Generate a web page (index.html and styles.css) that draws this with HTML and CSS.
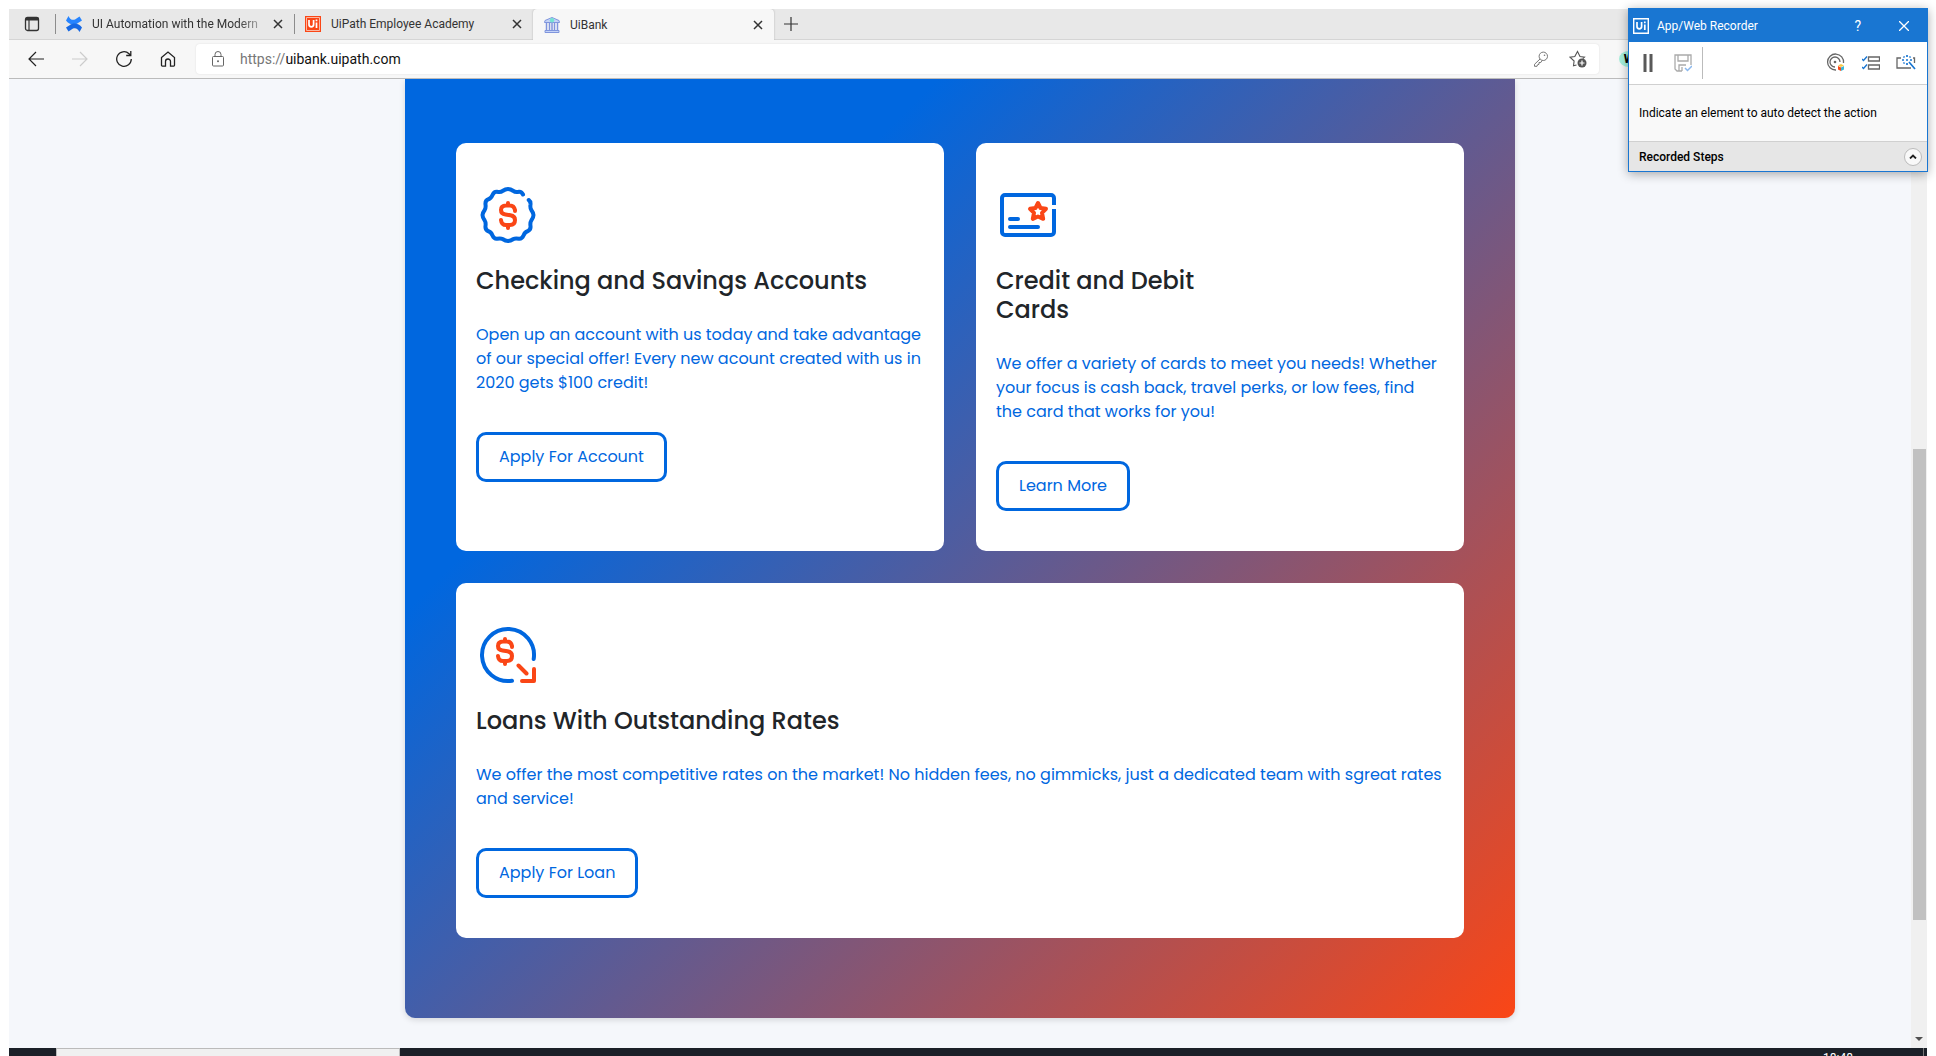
FILE: index.html
```html
<!DOCTYPE html>
<html lang="en">
<head>
<meta charset="utf-8">
<title>UiBank</title>
<link rel="stylesheet" href="styles.css">
</head>
<body>
<div class="desktop">
  <nav class="tabs" aria-label="Browser tabs">
    <button class="tab-menu" aria-label="Tab actions"><svg width="16" height="16" viewBox="0 0 16 16"><rect x="1.500" y="1.500" width="13" height="13" rx="2" fill="none" stroke="#333" stroke-width="1.300"/><path d="M1.500 3h13" stroke="#333" stroke-width="3"/><path d="M5 4v10" stroke="#333" stroke-width="1.200"/></svg></button>
    <div class="tab">
      <svg width="16" height="16" viewBox="0 0 16 16"><path d="M2.500 0C4 3.500 6.500 4.500 9 3.500L13.500.500 16 4.500l-4 2.500C9 9.500 3 9 0 4.500z" fill="#2684ff"/><path d="M13.500 16C12 12.500 9.500 11.500 7 12.500L2.500 15.500 0 11.500l4-2.500C7 6.500 13 7 16 11.500z" fill="#1668e3"/></svg>
      <span class="tab-title fade">UI Automation with the Modern</span>
      <button class="close" aria-label="Close tab"><svg width="10" height="10" viewBox="0 0 10 10"><path d="M1 1l8 8M9 1l-8 8" stroke="#333" stroke-width="1.500"/></svg></button>
    </div>
    <div class="tab">
      <svg width="16" height="16" viewBox="0 0 16 16"><path fill="#fa4616" d="M0 0h16v16H0z"/><path d="M1.500 1.500h13v13h-13z" fill="none" stroke="#fbb7a2"/><path d="M4 4v4.500a2.300 2.300 0 0 0 4.600 0V4M11.500 6.500V12M11.500 3.500v1.800" fill="none" stroke="#fff" stroke-width="1.700"/></svg>
      <span class="tab-title">UiPath Employee Academy</span>
      <button class="close" aria-label="Close tab"><svg width="10" height="10" viewBox="0 0 10 10"><path d="M1 1l8 8M9 1l-8 8" stroke="#333" stroke-width="1.500"/></svg></button>
    </div>
    <div class="tab active">
      <svg width="16" height="16" viewBox="0 0 16 16"><path d="M.500 5.500L1 3.500l7-3 7 3 .500 2z" fill="#c5d3f7" stroke="#7f95dd"/><circle cx="8" cy="3.300" r="2.200" fill="#74e3d3"/><path d="M2.500 6v7M5.500 6v7M8 6v7M10.500 6v7M13.500 6v7" stroke="#7f95dd" stroke-width="1.500"/><path d="M1 13.500h14v2H1z" fill="#c5d3f7" stroke="#7f95dd"/></svg>
      <span class="tab-title">UiBank</span>
      <button class="close" aria-label="Close tab"><svg width="10" height="10" viewBox="0 0 10 10"><path d="M1 1l8 8M9 1l-8 8" stroke="#333" stroke-width="1.500"/></svg></button>
    </div>
    <button class="new-tab" aria-label="New tab"><svg width="14" height="14" viewBox="0 0 14 14"><path d="M7 0v14M0 7h14" stroke="#333" stroke-width="1.200"/></svg></button>
  </nav>

  <header class="toolbar">
    <button aria-label="Back"><svg width="16" height="16" viewBox="0 0 16 16"><path d="M16 8H1M8 1L1 8l7 7" fill="none" stroke="#222" stroke-width="1.200"/></svg></button>
    <button aria-label="Forward" disabled><svg width="16" height="16" viewBox="0 0 16 16"><path d="M0 8h15M8 1l7 7-7 7" fill="none" stroke="#ccc" stroke-width="1.200"/></svg></button>
    <button aria-label="Refresh"><svg width="16" height="16" viewBox="0 0 16 16"><path d="M15.300 8A7.300 7.300 0 1 1 13 2.700l1.500 1.500M14.800 0v4.500h-4.600" fill="none" stroke="#222" stroke-width="1.300"/></svg></button>
    <button aria-label="Home"><svg width="16" height="16" viewBox="0 0 16 16"><path d="M1.500 6.500L8 1l6.500 5.500V14.300a.8.800 0 0 1-.8.800h-3.200V10.500a2.500 2.500 0 0 0-5 0V15.100H2.300a.8.800 0 0 1-.8-.8z" fill="none" stroke="#222" stroke-width="1.300"/></svg></button>
    <div class="address">
      <svg width="14" height="16" viewBox="0 0 14 16"><rect x="1.500" y="5.500" width="11" height="9.500" rx="1" fill="none" stroke="#666"/><path d="M4 5.500V3.500a3 3 0 0 1 6 0v2" fill="none" stroke="#666"/><circle cx="7" cy="10.300" r="1" fill="#666"/></svg>
      <a class="url" href="#"><span class="scheme">https://</span>uibank.uipath.com</a>
      <button aria-label="Passwords"><svg width="16" height="16" viewBox="0 0 16 16"><circle cx="10.300" cy="5.300" r="4.200" fill="none" stroke="#777"/><circle cx="11.500" cy="4.200" r=".8" fill="#777"/><path d="M7 8l-5.500 5.300v2H4l.5-1.500L6 13.300V11.500h1.800l1.200-2" fill="none" stroke="#777"/></svg></button>
      <button aria-label="Add to favorites"><svg width="18" height="18" viewBox="0 0 18 18"><path d="M7.500 15l-3 .8.600-4.800L1 7.200l4.800-.7L8.500 1.500 11 6.500l4.500.7-1.700 1.500" fill="none" stroke="#555" stroke-width="1.100"/><circle cx="13" cy="13" r="4.500" fill="#555"/><path d="M13 10.500v5M10.500 13h5" stroke="#fff" stroke-width="1.200"/></svg></button>
    </div>
    <span class="extension">W</span>
  </header>

  <div class="viewport">
    <main class="page">
      <section class="panel">
        <article class="card">
          <svg class="icon" viewBox="0 0 64 64" fill="none" stroke-width="4" stroke-linecap="round" stroke-linejoin="round"><path stroke="#0067df" d="M47 11.500q-1.500-3-4-2.700q-4 .6-5.500-.8q-3-2-5.500-2q-2.500 0-5.500 2q-1.500 1.400-5.500.8q-3-.3-4.500 3.200q-1.500 3.500-4 4.200q-3.500 1.300-3 5.300q.5 3.500-.8 5.500q-2.200 3-2.200 5q0 2.500 2.200 5.500q1.300 2 .8 5.500q-.5 4 3 5.300q2.500.7 4 4.200q1.500 3.500 4.500 3.200q4-.6 5.500.3q3 2 5.500 2q2.500 0 5.500-2q1.500-.9 5.500-.3q3 .3 4.500-3.200q1.500-3.500 4-4.200q3.500-1.300 3-5.300q-.5-3.500.8-5.500q2.200-3 2.200-5.500q0-2-2.200-5q-1.300-2-.8-5.500q.3-3-1.800-4.500"/><path stroke="#fa4616" d="M39 28v-1q-1-4.500-5-4.500h-4q-5 0-5 4.500 0 4 4.500 4.500l5 .8q4.500.7 4.500 4.700 0 5-5 5h-4q-4.500 0-5-5M32 22v-2M32 43v2"/></svg>
          <h2>Checking and Savings Accounts</h2>
          <p>Open up an account with us today and take advantage of our special offer! Every new acount created with us in 2020 gets $100 credit!</p>
          <button class="cta">Apply For Account</button>
        </article>
        <article class="card">
          <svg class="icon" viewBox="0 0 64 64" fill="none" stroke-width="4" stroke-linecap="round" stroke-linejoin="round"><path stroke="#0067df" stroke-linecap="butt" d="M58 22V15a3 3 0 0 0-3-3H9a3 3 0 0 0-3 3v34a3 3 0 0 0 3 3h46a3 3 0 0 0 3-3V26"/><path stroke="#0067df" d="M14 36h8M14 44h28"/><path stroke="#fa4616" d="M42 20l2.500 5 5.500.8-4 4 1.200 6-5.200-2.300-5.200 2.300 1.200-6-4-4 5.500-.8z"/></svg>
          <h2>Credit and Debit<br>Cards</h2>
          <p>We offer a variety of cards to meet you needs! Whether your focus is cash back, travel perks, or low fees, find the card that works for you!</p>
          <button class="cta">Learn More</button>
        </article>
        <article class="card wide">
          <svg class="icon" viewBox="0 0 64 64" fill="none" stroke-width="4" stroke-linecap="round" stroke-linejoin="round"><path stroke="#0067df" d="M57.700 36A26 26 0 1 0 36 57.700"/><path stroke="#fa4616" d="M36 24v-1q-1-4.500-5-4.500h-4q-5 0-5 4.500 0 4 4.500 4.500l5 .8q4.500.7 4.500 4.700 0 5-5 5h-4q-4.500 0-5-5M29 18v-2M29 39v2M42.500 42.500l8 8M46 58h12V46"/></svg>
          <h2>Loans With Outstanding Rates</h2>
          <p>We offer the most competitive rates on the market! No hidden fees, no gimmicks, just a dedicated team with sgreat rates and service!</p>
          <button class="cta">Apply For Loan</button>
        </article>
      </section>
    </main>
    <div class="scrollbar"><span class="thumb"></span><svg width="8" height="4" viewBox="0 0 8 4"><path d="M0 0h8L4 4z" fill="#505050"/></svg></div>
  </div>

  <footer class="taskbar"><span class="search"></span><time class="clock">18:48</time><span class="peek"></span></footer>
</div>

<aside class="recorder" aria-label="App/Web Recorder">
  <header class="rec-title">
    <svg width="16" height="16" viewBox="0 0 16 16"><path d="M.700.700h14.600v14.600H.700z" fill="none" stroke="#fff" stroke-width="1.400"/><path d="M4 4v4.500a2.300 2.300 0 0 0 4.600 0V4M11.800 6.500V12M11.800 3.500v1.800" fill="none" stroke="#fff" stroke-width="1.700"/></svg>
    <h1>App/Web Recorder</h1>
    <button class="help" aria-label="Help">?</button>
    <button class="rec-close" aria-label="Close"><svg width="10" height="10" viewBox="0 0 10 10"><path d="M0 0l10 10M10 0L0 10" stroke="#fff" stroke-width="1.300"/></svg></button>
  </header>
  <div class="rec-tools">
    <button aria-label="Pause"><svg width="10" height="18" viewBox="0 0 10 18"><path d="M2 0v18M8 0v18" stroke="#595959" stroke-width="3"/></svg></button>
    <button aria-label="Save"><svg width="18" height="18" viewBox="0 0 18 18"><path d="M8 17H3L1 15V1h16v10M4 1v6h10V1M5 17v-6h7M8 13v4" fill="none" stroke="#aaa" stroke-width="1.300"/><path d="M11 14l2.500 2.500L18 12" fill="none" stroke="#8ab8ee" stroke-width="1.500"/></svg></button>
    <span class="rule"></span>
    <button aria-label="Target"><svg width="20" height="20" viewBox="0 0 20 20"><path d="M10 17A8 8 0 1 1 17.500 10M9 14A5 5 0 1 1 14 9" fill="none" stroke="#666" stroke-width="1.300"/><circle cx="9" cy="9" r="1.300" fill="#666"/><path d="M12 13l3 1.500V18l-3-1.500z" fill="#fa4616"/><path d="M15 14.500l3-1.500v3.500L15 18z" fill="#38b6d8"/><path d="M12 12.500l3-1.500 3 1.500-3 1.500z" fill="#f7c948"/></svg></button>
    <button aria-label="Options"><svg width="18" height="16" viewBox="0 0 18 16"><path d="M6.500 2h11v4h-11zM6.500 10h11v4h-11z" fill="none" stroke="#666" stroke-width="1.300"/><path d="M0 4l1.500 1.500L5 1.500M0 12l1.500 1.500L5 9.500" fill="none" stroke="#1976d2" stroke-width="1.400"/></svg></button>
    <button aria-label="Detect"><svg width="20" height="16" viewBox="0 0 20 16"><path d="M5 3H1v10h14M17 3h1.500v5" fill="none" stroke="#666" stroke-width="1.300"/><path d="M11 0v2M11 8v2M6 5h2M14 5h2M7.500 1.500l1 1M7.500 8.500l1-1M14.500 1.500l-1 1M10 5h2M13 7l6 7" stroke="#1976d2" stroke-width="1.700"/></svg></button>
  </div>
  <p class="rec-hint">Indicate an element to auto detect the action</p>
  <div class="rec-steps"><h2>Recorded Steps</h2><button aria-label="Collapse"><svg width="8" height="5" viewBox="0 0 8 5"><path d="M1 4.500l3-3 3 3" fill="none" stroke="#222" stroke-width="1.800"/></svg></button></div>
</aside>
</body>
</html>
```

FILE: styles.css
```css
* { box-sizing: border-box; }
body { margin: 0; background: #fff; font: 12px/16px "Segoe UI", Roboto, sans-serif; color: #333; }
button { margin: 0; padding: 0; border: 0; background: none; font: inherit; color: inherit; }
h1, h2, p { margin: 0; font-weight: 400; }
svg { display: block; flex: none; }

.desktop { display: flex; flex-direction: column; height: 100vh; padding: 9px 9px 0; overflow: hidden; }

/* tab strip */
.tabs { display: flex; height: 31px; background: #e8e8e8; border-bottom: 1px solid #d5d5d5; }
.tab-menu { display: grid; place-items: center; width: 46px; }
.tab { display: flex; align-items: center; gap: 10px; width: 239px; padding: 0 11px; position: relative; }
.tab::before { content: ""; position: absolute; left: 0; top: 5px; height: 20px; border-left: 1px solid #8c8c8c; }
.tab.active { width: 241px; height: 31px; background: #f7f7f7; border-radius: 4px 4px 0 0; box-shadow: 0 0 2px #aaa; clip-path: inset(0 -3px 0 -3px); }
.tab.active::before { display: none; }
.tab-title { flex: 1; white-space: nowrap; overflow: hidden; }
.fade { mask-image: linear-gradient(90deg, #000 85%, #0004); }
.new-tab { display: grid; place-items: center; width: 33px; }

/* toolbar */
.toolbar { display: flex; align-items: center; gap: 28px; height: 39px; padding: 0 288px 0 19px; background: #f7f7f7; border-bottom: 1px solid #bbb; }
.address { display: flex; flex: 1; align-items: center; gap: 15px; height: 30px; margin-left: -8px; padding: 0 12px 0 15px; background: #fff; border-radius: 4px; box-shadow: 0 0 2px #ddd; font-size: 14px; }
.address button:last-child { margin-left: 5px; }
.url { flex: 1; color: #111; text-decoration: none; }
.scheme { color: #777; }
.extension { width: 20px; margin-left: -8px; border-radius: 50%; background: #a5f0dc; color: #000; font-weight: 800; text-align: center; }

/* page */
.viewport { display: flex; flex: 1; min-height: 0; }
.page { flex: 1; padding-bottom: 30px; background: #f5f7fb; overflow: hidden; }
.panel { display: grid; grid-template-columns: 1fr 1fr; gap: 32px; max-width: 1110px; margin: 0 auto; padding: 64px 51px 80px; border-radius: 0 0 10px 10px; background: linear-gradient(135deg, #0067df 26%, #fa4616); box-shadow: 0 2px 6px #0002; }
.card { padding: 40px 20px; border-radius: 10px; background: #fff; color: #0067df; font: 400 16px/24px Poppins, Inter, sans-serif; }
.wide { grid-column: 1 / -1; }
.icon { width: 64px; height: 64px; margin-bottom: 19px; }
.card h2 { margin-bottom: 28px; color: #212529; font-size: 24px; font-weight: 500; line-height: 29px; }
.card p { margin-bottom: 37px; }
.cta { height: 50px; padding: 0 20px; border: 3px solid #0067df; border-radius: 10px; }

.scrollbar { display: flex; flex-direction: column; align-items: center; width: 16px; padding-bottom: 7px; background: #f0f0f0; }
.thumb { width: 13px; height: 49%; margin: auto 0 117px; background: #c1c1c1; }

/* taskbar */
.taskbar { display: flex; height: 8px; padding-left: 47px; background: #1b2028; overflow: hidden; }
.search { width: 344px; background: #f0f0f0; border: 1px solid #bbb; border-bottom: 0; }
.clock { margin: 2px 70px 0 auto; color: #fff; }
.peek { width: 4px; border-left: 1px solid #777; }

/* recorder window */
.recorder { position: absolute; top: 8px; right: 8px; width: 300px; background: #f9f9f9; border: 1px solid #1976d2; box-shadow: 0 2px 10px #0005; color: #000; }
.rec-title { display: flex; align-items: center; height: 33px; padding: 0 18px 0 4px; background: #1976d2; color: #fff; }
.rec-title h1 { flex: 1; margin-left: 8px; font-size: 12px; }
.help { margin-right: 38px; font-size: 14px; }
.rec-tools { display: flex; align-items: center; gap: 16px; height: 43px; padding: 0 11px 0 14px; background: #fff; border-bottom: 1px solid #d0d0d0; }
.rec-tools button:nth-child(2) { margin-left: 5px; }
.rule { height: 32px; margin: 0 auto 0 -6px; border-left: 1px solid #bbb; }
.rec-hint { padding: 20px 10px; border-bottom: 1px solid #d0d0d0; }
.rec-steps { display: flex; align-items: center; justify-content: space-between; height: 29px; padding: 0 5px 0 10px; background: #e6e6e6; }
.rec-steps h2 { font-size: 12px; font-weight: 500; }
.rec-steps button { display: grid; place-items: center; width: 18px; height: 18px; border: 1px solid #bbb; border-radius: 50%; background: #f9f9f9; }
```
